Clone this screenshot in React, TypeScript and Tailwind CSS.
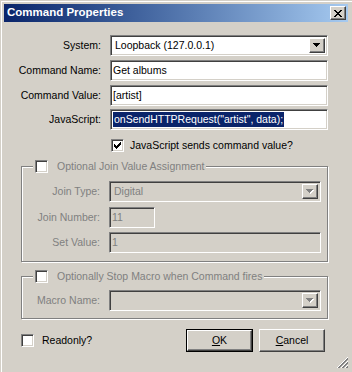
import type { ReactNode } from 'react';

const sunken =
  'border border-t-[#808080] border-l-[#808080] border-r-white border-b-white shadow-[inset_1px_1px_0_#404040,inset_-1px_-1px_0_#d4d0c8]';
const raised =
  'border border-t-white border-l-white border-r-[#404040] border-b-[#404040] shadow-[inset_-1px_-1px_0_#808080,inset_1px_1px_0_#d4d0c8]';

function Arrow({ disabled }: { disabled?: boolean }) {
  const fill = disabled ? '#808080' : '#000';
  return (
    <svg width="8" height="5" viewBox="0 0 8 5" shapeRendering="crispEdges">
      {disabled && (
        <g fill="#fff">
          <rect x="1" y="1" width="7" height="1" />
          <rect x="2" y="2" width="5" height="1" />
          <rect x="3" y="3" width="3" height="1" />
          <rect x="4" y="4" width="1" height="1" />
        </g>
      )}
      <g fill={fill}>
        <rect x="0" y="0" width="7" height="1" />
        <rect x="1" y="1" width="5" height="1" />
        <rect x="2" y="2" width="3" height="1" />
        <rect x="3" y="3" width="1" height="1" />
      </g>
    </svg>
  );
}

function Combo({ value, disabled, w = 'w-[218px]' }: { value: string; disabled?: boolean; w?: string }) {
  return (
    <div className={`${sunken} ${w} h-[21px] p-[2px] flex items-stretch ${disabled ? 'bg-[#d4d0c8] text-[#808080]' : 'bg-white text-black'}`}>
      <div className="flex-1 flex items-center pl-[2px] whitespace-nowrap">{value}</div>
      <div className={`${raised} w-[16px] bg-[#d4d0c8] flex items-center justify-center`}>
        <Arrow disabled={disabled} />
      </div>
    </div>
  );
}

function Field({ children, disabled, w = 'w-[218px]', h = 'h-[21px]' }: { children?: ReactNode; disabled?: boolean; w?: string; h?: string }) {
  return (
    <div className={`${sunken} ${w} ${h} px-[2px] flex items-center whitespace-nowrap ${disabled ? 'bg-[#d4d0c8] text-[#808080]' : 'bg-white text-black'}`}>
      {children}
    </div>
  );
}

function Check({ checked }: { checked?: boolean }) {
  return (
    <div className={`${sunken} w-[13px] h-[13px] bg-white flex items-center justify-center shrink-0`}>
      {checked && (
        <svg width="7" height="7" viewBox="0 0 7 7" shapeRendering="crispEdges">
          <path d="M0 2h1v1h1v1h1V3h1V2h1V1h1V0h1v3H6v1H5v1H4v1H3v1H2V6H1V5H0z" fill="#000" />
        </svg>
      )}
    </div>
  );
}

function Row({ label, children, lw, disabled, className = '' }: { label: string; children: ReactNode; lw: string; disabled?: boolean; className?: string }) {
  return (
    <div className={`flex items-center ${className}`}>
      <div className={`${lw} text-right whitespace-nowrap ${disabled ? 'text-[#808080]' : 'text-black'}`}>{label}</div>
      <div className="ml-[9px]">{children}</div>
    </div>
  );
}

function Button({ children, def }: { children: ReactNode; def?: boolean }) {
  if (def) {
    return (
      <div className="border border-black w-[67px] h-[23px] bg-[#d4d0c8]">
        <div className={`${raised} w-full h-full flex items-center justify-center`}>{children}</div>
      </div>
    );
  }
  return <div className={`${raised} w-[66px] h-[23px] bg-[#d4d0c8] flex items-center justify-center`}>{children}</div>;
}

export default function App() {
  return (
    <div className="relative w-[352px] h-[372px] overflow-hidden bg-[#d4d0c8] shadow-[inset_1px_1px_0_#d4d0c8,inset_2px_2px_0_#fff] font-['Liberation_Sans',Arial,sans-serif] text-[10.5px] text-black">
      <div className="mx-[4px] mt-[4px] h-[18px] bg-gradient-to-r from-[#0a246a] to-[#a6caf0] flex items-center justify-between pl-[3px] pr-[2px]">
        <span className="text-white font-bold text-[11.5px] leading-none">Command Properties</span>
        <div className={`${raised} w-[16px] h-[14px] bg-[#d4d0c8] flex items-center justify-center`}>
          <svg width="8" height="7" viewBox="0 0 8 7" shapeRendering="crispEdges">
            <path d="M0 0h2v1h1v1h2V1h1V0h2v1H7v1H6v1H5v1h1v1h1v1h1v1H6V6H5V5H3v1H2v1H0V6h1V5h1V4h1V3H2V2H1V1H0z" fill="#000" />
          </svg>
        </div>
      </div>

      <Row label="System:" lw="w-[101px]" className="mt-[13px]">
        <Combo value="Loopback (127.0.0.1)" />
      </Row>
      <Row label="Command Name:" lw="w-[101px]" className="mt-[4px]">
        <Field>Get albums</Field>
      </Row>
      <Row label="Command Value:" lw="w-[101px]" className="mt-[4px]">
        <Field>[artist]</Field>
      </Row>
      <Row label="JavaScript:" lw="w-[101px]" className="mt-[3px]">
        <Field h="h-[21px]">
          <span className="bg-[#0a246a] text-white leading-[15px] px-[1px]">onSendHTTPRequest("artist", data);</span>
        </Field>
      </Row>

      <div className="flex items-center h-[13px] mt-[9px] ml-[111px]">
        <Check checked />
        <span className="ml-[6px]">JavaScript sends command value?</span>
      </div>

      <div className="relative ml-[21px] mt-[14px] w-[307px] h-[96px] border border-[#808080] shadow-[inset_1px_1px_0_#fff,1px_1px_0_#fff] pt-[14px]">
        <div className="absolute -top-[7px] left-[11px] bg-[#d4d0c8] px-[2px] h-[13px] flex items-center">
          <Check />
          <span className="ml-[9px] text-[#808080]">Optional Join Value Assignment</span>
        </div>
        <Row label="Join Type:" lw="w-[78px]" disabled>
          <Combo value="Digital" disabled w="w-[212px]" />
        </Row>
        <Row label="Join Number:" lw="w-[78px]" disabled className="mt-[5px]">
          <Field disabled w="w-[46px]">11</Field>
        </Row>
        <Row label="Set Value:" lw="w-[78px]" disabled className="mt-[4px]">
          <Field disabled w="w-[212px]">1</Field>
        </Row>
      </div>

      <div className="relative ml-[21px] mt-[14px] w-[307px] h-[43px] border border-[#808080] shadow-[inset_1px_1px_0_#fff,1px_1px_0_#fff] pt-[13px]">
        <div className="absolute -top-[7px] left-[11px] bg-[#d4d0c8] px-[2px] h-[13px] flex items-center">
          <Check />
          <span className="ml-[9px] text-[#808080]">Optionally Stop Macro when Command fires</span>
        </div>
        <Row label="Macro Name:" lw="w-[78px]" disabled>
          <Combo value="" disabled w="w-[212px]" />
        </Row>
      </div>

      <div className="flex items-center mt-[10px] ml-[21px]">
        <Check />
        <span className="ml-[8px]">Readonly?</span>
        <div className="ml-auto mr-[27px] flex gap-[6px]">
          <Button def>
            <span><span className="underline">O</span>K</span>
          </Button>
          <Button>
            <span><span className="underline">C</span>ancel</span>
          </Button>
        </div>
      </div>

      <svg className="absolute right-[4px] bottom-[3px]" width="12" height="12" viewBox="0 0 12 12" shapeRendering="crispEdges">
        <g strokeWidth="1">
          <line x1="11.5" y1="0.5" x2="0.5" y2="11.5" stroke="#fff" />
          <line x1="11.5" y1="1.5" x2="1.5" y2="11.5" stroke="#808080" />
          <line x1="11.5" y1="2.5" x2="2.5" y2="11.5" stroke="#808080" />
          <line x1="11.5" y1="4.5" x2="4.5" y2="11.5" stroke="#fff" />
          <line x1="11.5" y1="5.5" x2="5.5" y2="11.5" stroke="#808080" />
          <line x1="11.5" y1="6.5" x2="6.5" y2="11.5" stroke="#808080" />
          <line x1="11.5" y1="8.5" x2="8.5" y2="11.5" stroke="#fff" />
          <line x1="11.5" y1="9.5" x2="9.5" y2="11.5" stroke="#808080" />
          <line x1="11.5" y1="10.5" x2="10.5" y2="11.5" stroke="#808080" />
        </g>
      </svg>
    </div>
  );
}
